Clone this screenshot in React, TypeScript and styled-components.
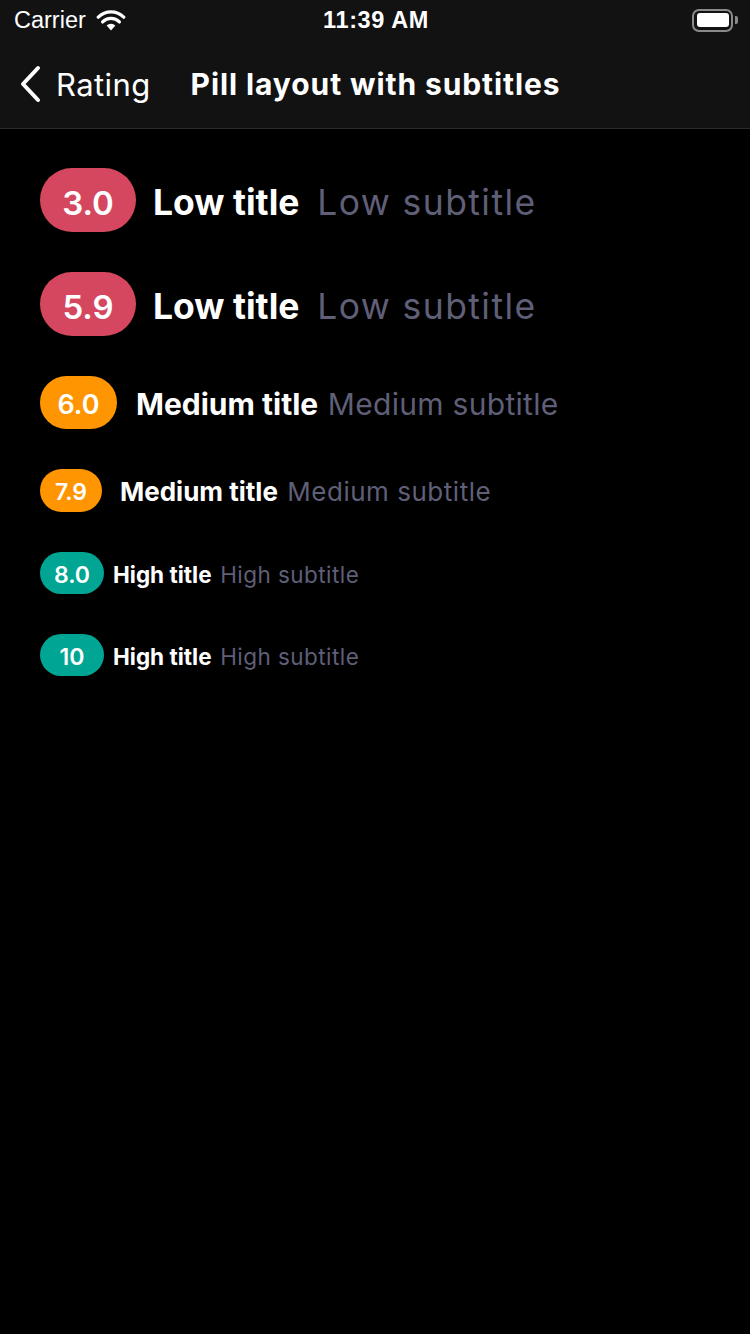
import React from 'react';
import styled, { createGlobalStyle } from 'styled-components';

const GlobalStyle = createGlobalStyle`
  html, body {
    margin: 0;
    padding: 0;
    background: #000;
  }
  body {
    font-family: Inter, "Noto Sans", sans-serif;
    color: #fff;
  }
`;

type Size = 'lg' | 'md' | 'sm' | 'xs';

const sizes: Record<
  Size,
  { h: number; font: number; pillFont: number; pad: number; gap: number; minW: number; subGap: number; subTrack: number; drop: number }
> = {
  lg: { h: 64, font: 35.5, pillFont: 33, pad: 20, gap: 17, minW: 96, subGap: 0.5, subTrack: 0.04, drop: 4 },
  md: { h: 53, font: 30, pillFont: 27, pad: 16, gap: 19, minW: 77, subGap: 0.32, subTrack: 0.01, drop: 3 },
  sm: { h: 43, font: 26, pillFont: 23, pad: 10, gap: 18, minW: 62, subGap: 0.36, subTrack: 0.02, drop: 2 },
  xs: { h: 42, font: 22.5, pillFont: 23, pad: 10, gap: 9, minW: 64, subGap: 0.38, subTrack: 0.02, drop: 2 },
};

const colors = {
  low: '#d4475f',
  medium: '#ff9500',
  high: '#00a693',
};

const Screen = styled.div`
  width: 750px;
  min-height: 1334px;
  background: #000;
`;

const Header = styled.header`
  background: #121212;
  border-bottom: 1px solid #2a2a2a;
`;

const StatusBar = styled.div`
  height: 40px;
  display: grid;
  grid-template-columns: 1fr auto 1fr;
  align-items: center;
  padding: 0 12px 0 14px;
  font-family: "Liberation Sans", Roboto, sans-serif;
  font-size: 23.5px;
`;

const Carrier = styled.div`
  display: flex;
  align-items: center;
  gap: 10px;
`;

const Clock = styled.div`
  font-weight: 600;
  font-size: 23.5px;
  letter-spacing: 0.6px;
`;

const Battery = styled.div`
  justify-self: end;
  display: flex;
  align-items: center;
`;

const BatteryBody = styled.div`
  width: 41px;
  height: 23px;
  border: 2px solid #8a8a8a;
  border-radius: 7px;
  padding: 2.5px;
  box-sizing: border-box;
  display: flex;
`;

const BatteryFill = styled.div`
  flex: 1;
  background: #fff;
  border-radius: 3px;
`;

const BatteryNub = styled.div`
  width: 3px;
  height: 8px;
  margin-left: 2px;
  background: #8a8a8a;
  border-radius: 0 2px 2px 0;
`;

const NavBar = styled.div`
  height: 88px;
  display: flex;
  align-items: center;
  padding-left: 18px;
`;

const Back = styled.div`
  display: flex;
  align-items: center;
  gap: 14px;
  font-size: 31px;
  font-weight: 400;
  letter-spacing: 0.4px;
  margin-right: 40px;
`;

const NavTitle = styled.h1`
  margin: 0;
  font-size: 30px;
  font-weight: 700;
  letter-spacing: 0.9px;
`;

const List = styled.div`
  display: flex;
  flex-direction: column;
  gap: 40px;
  padding: 39px 40px;
`;

const Row = styled.div<{ $size: Size }>`
  display: flex;
  align-items: center;
  gap: ${(p) => sizes[p.$size].gap}px;
  font-size: ${(p) => sizes[p.$size].font}px;
  white-space: nowrap;
`;

const Pill = styled.div<{ $size: Size; $level: keyof typeof colors }>`
  height: ${(p) => sizes[p.$size].h}px;
  min-width: ${(p) => sizes[p.$size].minW}px;
  box-sizing: border-box;
  padding: ${(p) => sizes[p.$size].drop + 1}px ${(p) => sizes[p.$size].pad}px 0;
  border-radius: ${(p) => sizes[p.$size].h / 2}px;
  background: ${(p) => colors[p.$level]};
  display: flex;
  align-items: center;
  justify-content: center;
  font-size: ${(p) => sizes[p.$size].pillFont}px;
  font-weight: 600;
  color: #fff;
`;

const Texts = styled.span<{ $size: Size }>`
  padding-top: ${(p) => sizes[p.$size].drop}px;
`;

const Title = styled.span`
  font-weight: 700;
  color: #fff;
`;

const Subtitle = styled.span<{ $size: Size }>`
  font-weight: 400;
  color: #5f5f77;
  margin-left: ${(p) => sizes[p.$size].subGap}em;
  letter-spacing: ${(p) => sizes[p.$size].subTrack}em;
`;

const Wifi = () => (
  <svg width="30" height="22" viewBox="0 0 30 22">
    <path d="M15 21.5 L10.6 16.6 A6.4 6.4 0 0 1 19.4 16.6 Z" fill="#fff" />
    <path d="M6.6 12.9 A11.8 11.8 0 0 1 23.4 12.9" stroke="#fff" strokeWidth="3.3" fill="none" strokeLinecap="round" />
    <path d="M2.3 8.2 A18 18 0 0 1 27.7 8.2" stroke="#fff" strokeWidth="3.3" fill="none" strokeLinecap="round" />
  </svg>
);

const Chevron = () => (
  <svg width="24" height="38" viewBox="0 0 24 38">
    <path d="M20 3 L5 19 L20 35" stroke="#fff" strokeWidth="4" fill="none" strokeLinecap="round" strokeLinejoin="round" />
  </svg>
);

const rows: { value: string; level: keyof typeof colors; size: Size; title: string; subtitle: string }[] = [
  { value: '3.0', level: 'low', size: 'lg', title: 'Low title', subtitle: 'Low subtitle' },
  { value: '5.9', level: 'low', size: 'lg', title: 'Low title', subtitle: 'Low subtitle' },
  { value: '6.0', level: 'medium', size: 'md', title: 'Medium title', subtitle: 'Medium subtitle' },
  { value: '7.9', level: 'medium', size: 'sm', title: 'Medium title', subtitle: 'Medium subtitle' },
  { value: '8.0', level: 'high', size: 'xs', title: 'High title', subtitle: 'High subtitle' },
  { value: '10', level: 'high', size: 'xs', title: 'High title', subtitle: 'High subtitle' },
];

export default function App() {
  return (
    <Screen>
      <GlobalStyle />
      <Header>
        <StatusBar>
          <Carrier>
            Carrier
            <Wifi />
          </Carrier>
          <Clock>11:39 AM</Clock>
          <Battery>
            <BatteryBody>
              <BatteryFill />
            </BatteryBody>
            <BatteryNub />
          </Battery>
        </StatusBar>
        <NavBar>
          <Back>
            <Chevron />
            Rating
          </Back>
          <NavTitle>Pill layout with subtitles</NavTitle>
        </NavBar>
      </Header>
      <List>
        {rows.map((r, i) => (
          <Row key={i} $size={r.size}>
            <Pill $size={r.size} $level={r.level}>
              {r.value}
            </Pill>
            <Texts $size={r.size}>
              <Title>{r.title}</Title>
              <Subtitle $size={r.size}>{r.subtitle}</Subtitle>
            </Texts>
          </Row>
        ))}
      </List>
    </Screen>
  );
}
